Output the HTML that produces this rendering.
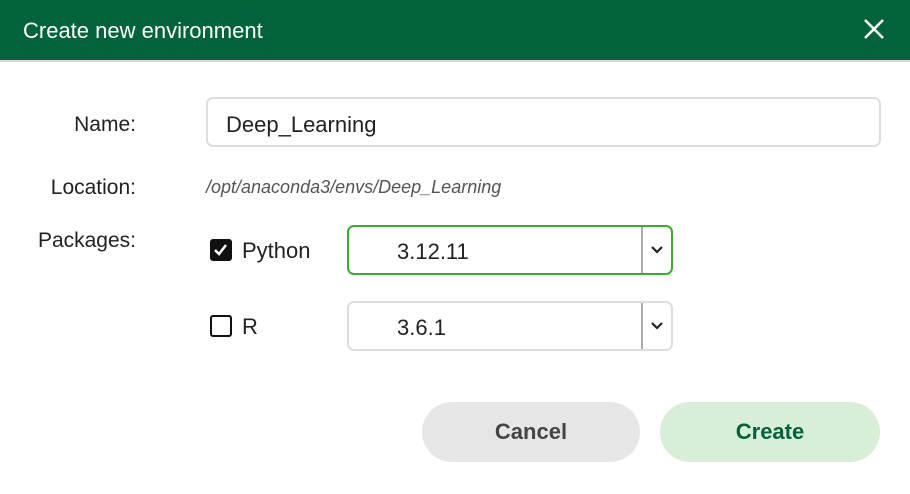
<!DOCTYPE html>
<html><head><style>
*{box-sizing:border-box;margin:0;padding:0}
body{width:910px;height:494px;background:#fff;font-family:"Liberation Sans",sans-serif;position:relative;overflow:hidden;color:#222}
.hd{position:absolute;left:0;top:0;width:910px;height:62px;background:#006339;border-bottom:2px solid #d8d8d8}
.hd span{position:absolute;left:23px;top:18px;color:#fff;font-size:22px}
.lbl{position:absolute;font-size:21px;color:#222;text-align:right;width:136px;left:0}
.inp{position:absolute;left:206px;top:97px;width:675px;height:50px;border:2px solid #ddd;border-radius:7px;font-size:22px;padding:13px 0 0 18px}
.loc{position:absolute;left:206px;top:177px;font-size:18px;font-style:italic;color:#555}
.cb{position:absolute;left:210px;width:22px;height:22px;border:2.5px solid #111;border-radius:3px}
.cb.on{background:#111}
.ct{position:absolute;font-size:22px}
.sel{position:absolute;left:347px;width:326px;height:50px;border:2px solid #ddd;border-radius:7px}
.sel .v{position:absolute;left:48px;top:12px;font-size:22px}
.sel .d{position:absolute;left:292px;top:0;width:2px;height:46px;background:#aaa}
.sel svg{position:absolute;left:301px;top:17px}
.btn{position:absolute;top:402px;height:60px;border-radius:30px;font-size:22px;font-weight:bold;text-align:center;line-height:60px}
</style></head><body>
<div class="hd"><span>Create new environment</span>
<svg style="position:absolute;left:863px;top:18px" width="22" height="22" viewBox="0 0 22 22"><path d="M2 2L20 20M20 2L2 20" stroke="#fff" stroke-width="2.6"/></svg></div>
<div class="lbl" style="top:113px">Name:</div>
<div class="inp">Deep_Learning</div>
<div class="lbl" style="top:176px">Location:</div>
<div class="loc">/opt/anaconda3/envs/Deep_Learning</div>
<div class="lbl" style="top:229px">Packages:</div>
<div class="cb on" style="top:239px"><svg width="17" height="17" viewBox="0 0 17 17" style="position:absolute;left:0;top:0"><path d="M3 9l4 4l7-9" stroke="#fff" stroke-width="2.5" fill="none"/></svg></div>
<div class="ct" style="left:242px;top:238px">Python</div>
<div class="sel" style="top:225px;border-color:#3aad2e"><span class="v">3.12.11</span><div class="d"></div><svg width="14" height="12" viewBox="0 0 14 12"><path d="M2 3l5 5l5-5" stroke="#222" stroke-width="2.2" fill="none"/></svg></div>
<div class="cb" style="top:315px"></div>
<div class="ct" style="left:242px;top:314px">R</div>
<div class="sel" style="top:301px"><span class="v">3.6.1</span><div class="d"></div><svg width="14" height="12" viewBox="0 0 14 12"><path d="M2 3l5 5l5-5" stroke="#222" stroke-width="2.2" fill="none"/></svg></div>
<div class="btn" style="left:422px;width:218px;background:#e6e6e6;color:#444">Cancel</div>
<div class="btn" style="left:660px;width:220px;background:#d8eed8;color:#006339">Create</div>
</body></html>
